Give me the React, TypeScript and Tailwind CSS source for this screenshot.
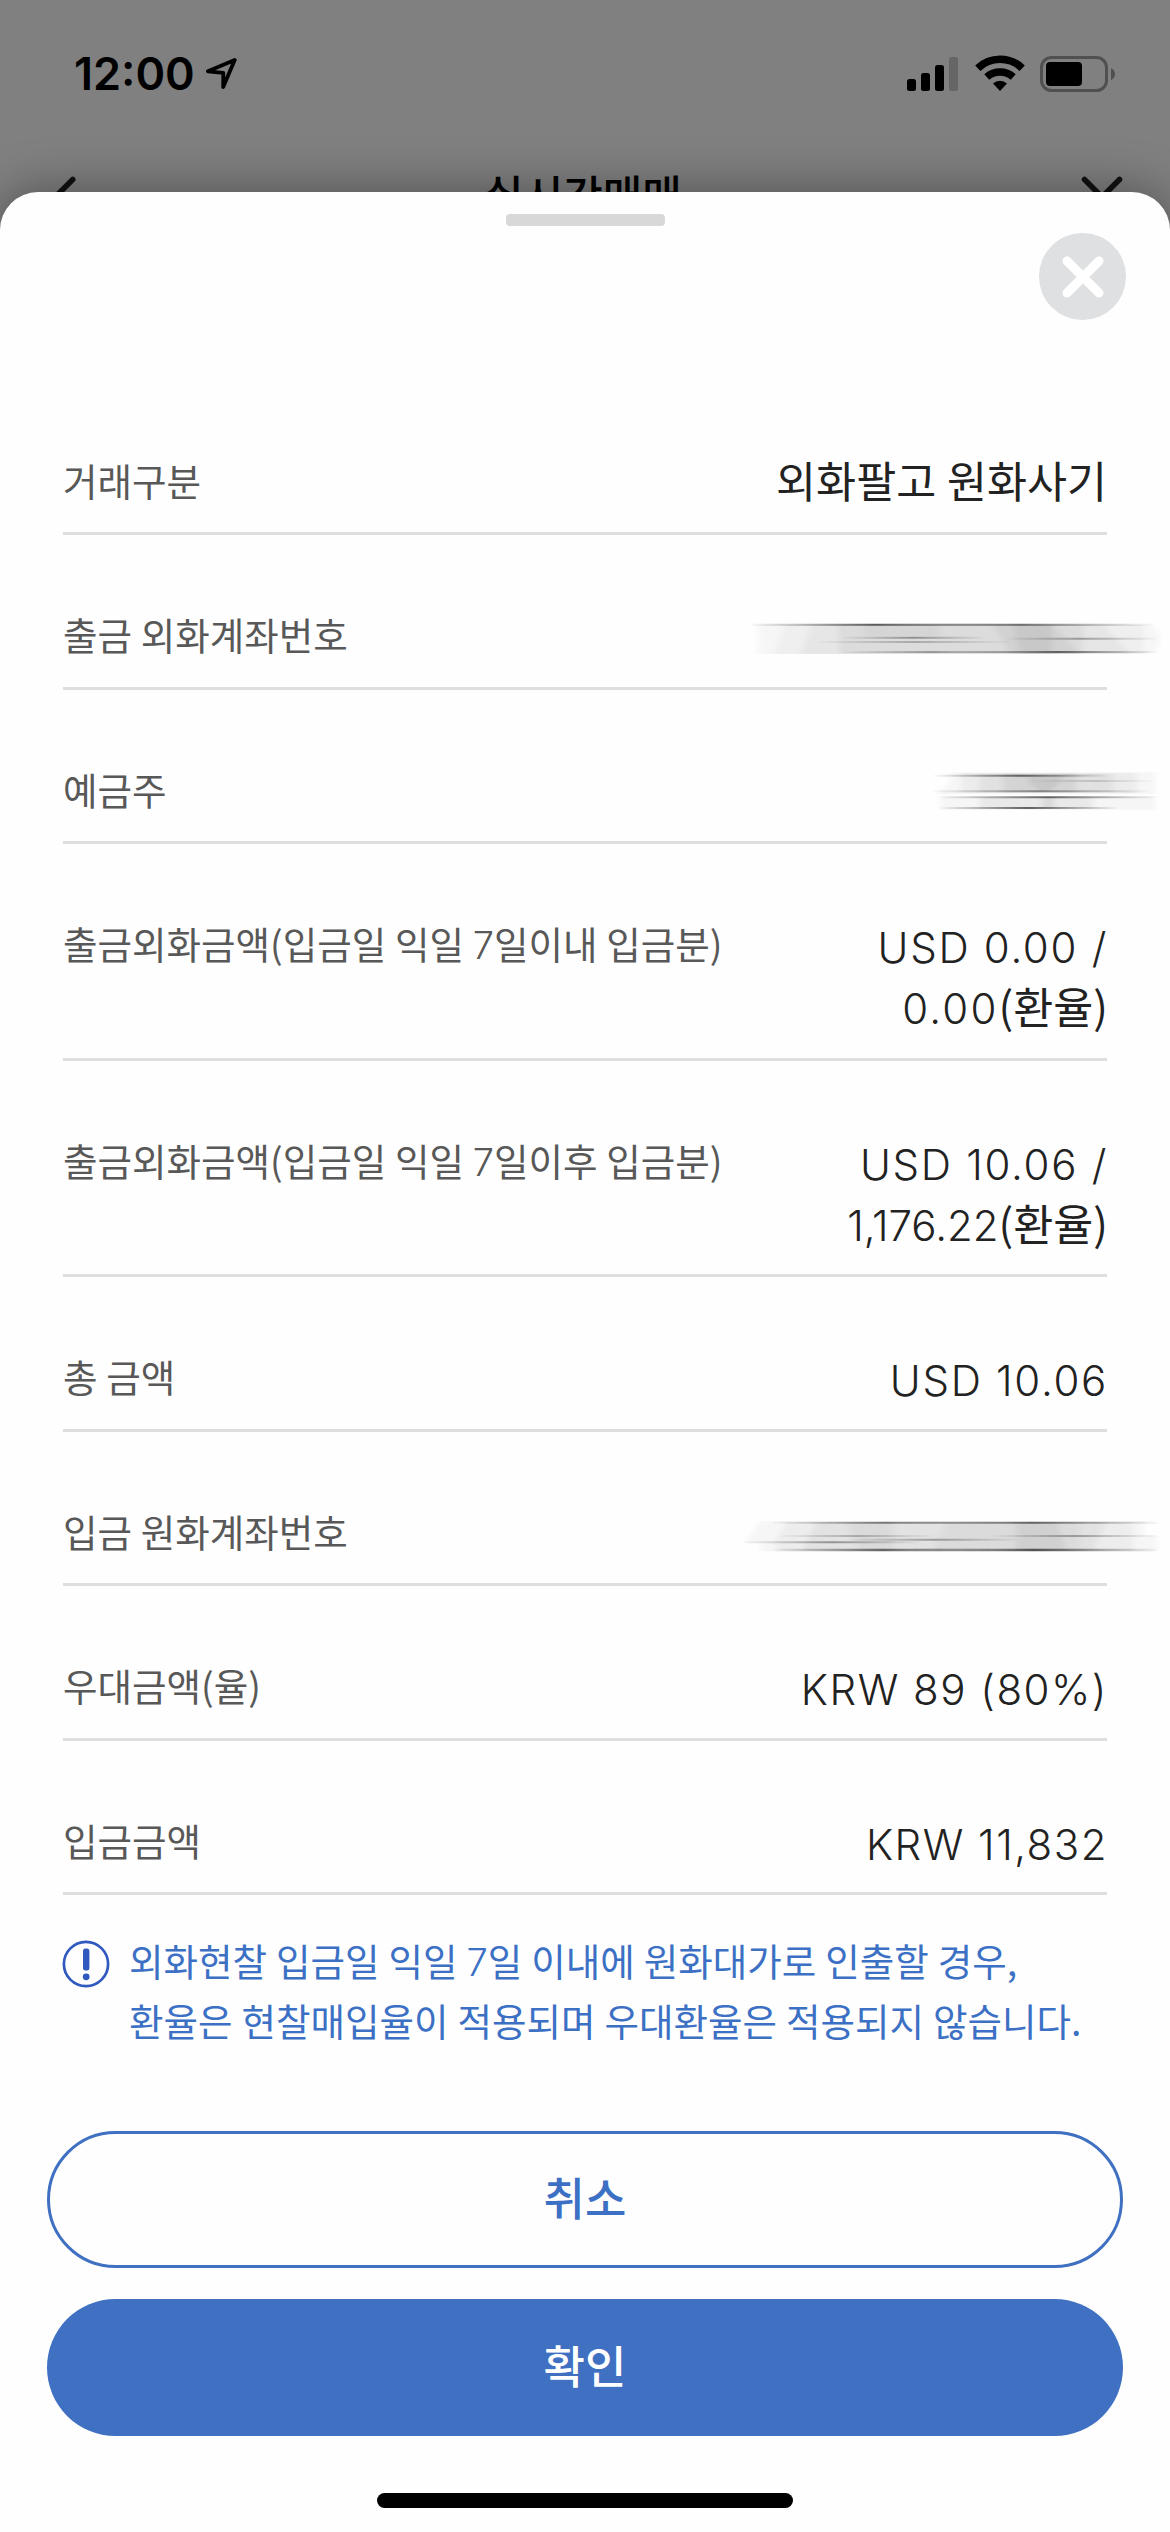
import { X, ChevronLeft } from "lucide-react";
import type { ReactNode } from "react";

type Band = { d: string; fill: string };
type Streak = { x1: number; x2: number; y: number; w: number; opacity: number };

function Smudge({
    id,
    viewBox,
    className,
    bands,
    streaks,
}: {
    id: string;
    viewBox: string;
    className: string;
    bands: Band[];
    streaks: Streak[];
}) {
    return (
        <svg viewBox={viewBox} className={className} aria-hidden="true">
            <defs>
                <filter id={`${id}-soft`} x="-5%" y="-5%" width="110%" height="110%">
                    <feGaussianBlur stdDeviation="9 1.2" />
                </filter>
                <filter id={`${id}-line`} x="-5%" y="-60%" width="110%" height="220%">
                    <feGaussianBlur stdDeviation="4 1.3" />
                </filter>
                <linearGradient id={`${id}-ink`}>
                    <stop offset="0" stopColor="#333" stopOpacity="0.05" />
                    <stop offset="0.5" stopColor="#333" stopOpacity="1" />
                    <stop offset="1" stopColor="#333" stopOpacity="0.05" />
                </linearGradient>
            </defs>
            <g filter={`url(#${id}-soft)`}>
                {bands.map((band, i) => (
                    <path key={i} d={band.d} fill={band.fill} />
                ))}
            </g>
            {streaks.map((s, i) => (
                <rect
                    key={i}
                    x={s.x1}
                    y={s.y - s.w / 2}
                    width={s.x2 - s.x1}
                    height={s.w}
                    rx={s.w / 2}
                    fill={`url(#${id}-ink)`}
                    filter={`url(#${id}-line)`}
                    opacity={s.opacity}
                />
            ))}
        </svg>
    );
}

function ForeignAccountSmudge() {
    return (
        <Smudge
            id="foreign"
            viewBox="150 600 1240 120"
            className="mt-[16px] -mr-[56px] h-[40px] w-[413px] shrink-0"
            bands={[
                { d: "M176 618H1340Q1378 624 1378 660T1336 704H176Z", fill: "#f6f6f6" },
                { d: "M254 618H1330V704H222Z", fill: "#efefef" },
                { d: "M336 618H1212L1290 704H300Z", fill: "#e6e6e6" },
                { d: "M412 618H1150V704H420Z", fill: "#dcdcdc" },
                { d: "M492 618H720V650H492Z", fill: "#d5d5d5" },
                { d: "M880 618H1060L1140 704H930Z", fill: "#d2d2d2" },
                { d: "M940 618H1056V704H960Z", fill: "#c8c8c8" },
            ]}
            streaks={[
                { x1: 155, x2: 900, y: 617, w: 6, opacity: 0.8 },
                { x1: 560, x2: 1360, y: 617, w: 6, opacity: 0.7 },
                { x1: 430, x2: 850, y: 656, w: 6, opacity: 0.45 },
                { x1: 355, x2: 930, y: 669, w: 5, opacity: 0.4 },
                { x1: 920, x2: 1370, y: 659, w: 6, opacity: 0.4 },
                { x1: 430, x2: 960, y: 699, w: 6, opacity: 0.4 },
                { x1: 780, x2: 1370, y: 699, w: 6, opacity: 0.7 },
            ]}
        />
    );
}

function HolderSmudge() {
    return (
        <Smudge
            id="holder"
            viewBox="700 1045 690 135"
            className="mt-[10px] -mr-[56px] h-[45px] w-[230px] shrink-0"
            bands={[
                { d: "M760 1058H1366V1124H710Q745 1108 760 1058Z", fill: "#f6f6f6" },
                { d: "M722 1130H1366V1170H722Z", fill: "#f6f6f6" },
                { d: "M786 1060H1310V1120H786Z", fill: "#ececec" },
                { d: "M840 1134H1180V1166H840Z", fill: "#e9e9e9" },
                { d: "M840 1062H1240V1118H840Z", fill: "#e1e1e1" },
                { d: "M910 1062H1130V1118H910Z", fill: "#d4d4d4" },
                { d: "M980 1066H1090Q1070 1112 1035 1116Q990 1108 980 1066Z", fill: "#c8c8c8" },
                { d: "M1028 1134H1062V1166H1028Z", fill: "#d8d8d8" },
            ]}
            streaks={[
                { x1: 705, x2: 1220, y: 1068, w: 6, opacity: 0.7 },
                { x1: 1000, x2: 1360, y: 1084, w: 5, opacity: 0.25 },
                { x1: 700, x2: 1340, y: 1115, w: 6, opacity: 0.5 },
                { x1: 725, x2: 1365, y: 1133, w: 6, opacity: 0.75 },
                { x1: 725, x2: 1250, y: 1165, w: 6, opacity: 0.75 },
            ]}
        />
    );
}

function WonAccountSmudge() {
    return (
        <Smudge
            id="won"
            viewBox="130 105 1260 125"
            className="mt-[15px] -mr-[56px] h-[41.7px] w-[420px] shrink-0"
            bands={[
                { d: "M180 124H1334V166H1370V214H184V190H136Z", fill: "#f6f6f6" },
                { d: "M262 126H1300V212H240L224 190Z", fill: "#ededed" },
                { d: "M350 126H1220L1180 212H310Z", fill: "#e2e2e2" },
                { d: "M440 126H580V212H480Z", fill: "#dadada" },
                { d: "M740 126H1140V212H700Z", fill: "#dbdbdb" },
                { d: "M950 126H1070L1100 212H950Z", fill: "#d0d0d0" },
            ]}
            streaks={[
                { x1: 220, x2: 900, y: 128, w: 6, opacity: 0.6 },
                { x1: 620, x2: 1375, y: 128, w: 6, opacity: 0.7 },
                { x1: 240, x2: 700, y: 168, w: 6, opacity: 0.3 },
                { x1: 135, x2: 660, y: 187, w: 6, opacity: 0.45 },
                { x1: 440, x2: 960, y: 179, w: 6, opacity: 0.4 },
                { x1: 880, x2: 1370, y: 168, w: 6, opacity: 0.4 },
                { x1: 220, x2: 880, y: 210, w: 7, opacity: 0.7 },
                { x1: 640, x2: 1370, y: 210, w: 7, opacity: 0.8 },
            ]}
        />
    );
}

function Amount({
    children,
    className = "tracking-[1.7px]",
}: {
    children: ReactNode;
    className?: string;
}) {
    return (
        <span
            className={`-mr-[1px] block font-['Inter'] text-[42px] leading-[61px] font-light first:mt-[5px] ${className}`}
        >
            {children}
        </span>
    );
}

function RateUnit() {
    return (
        <span className="font-['Noto_Sans_CJK_KR',sans-serif] text-[43.5px] leading-none font-normal tracking-normal">
            (환율)
        </span>
    );
}

function Seven() {
    return <span className="font-['Inter'] text-[38px] leading-none font-light">7</span>;
}

const rows: { id: string; label: ReactNode; value: ReactNode; tall?: boolean }[] = [
    {
        id: "type",
        label: "거래구분",
        value: <span className="text-[43.5px] [word-spacing:1px]">외화팔고 원화사기</span>,
    },
    { id: "from", label: "출금 외화계좌번호", value: <ForeignAccountSmudge /> },
    { id: "holder", label: "예금주", value: <HolderSmudge /> },
    {
        id: "within",
        label: (
            <>
                출금외화금액(입금일 익일 <Seven />
                일이내 입금분)
            </>
        ),
        tall: true,
        value: (
            <>
                <Amount>USD 0.00 /</Amount>
                <Amount className="tracking-[2.2px]">
                    0.00
                    <RateUnit />
                </Amount>
            </>
        ),
    },
    {
        id: "after",
        label: (
            <>
                출금외화금액(입금일 익일 <Seven />
                일이후 입금분)
            </>
        ),
        tall: true,
        value: (
            <>
                <Amount>USD 10.06 /</Amount>
                <Amount className="tracking-normal">
                    1,176.22
                    <RateUnit />
                </Amount>
            </>
        ),
    },
    { id: "total", label: "총 금액", value: <Amount>USD 10.06</Amount> },
    { id: "to", label: "입금 원화계좌번호", value: <WonAccountSmudge /> },
    {
        id: "discount",
        label: "우대금액(율)",
        value: <Amount className="tracking-[1.5px]">KRW 89 (80%)</Amount>,
    },
    {
        id: "deposit",
        label: "입금금액",
        value: <Amount className="tracking-[1.5px]">KRW 11,832</Amount>,
    },
];

function StatusBar() {
    return (
        <div className="flex h-[150px] items-start justify-between pt-[47px] pr-[54px] pl-[74px]">
            <div className="flex items-start">
                <span className="font-['Inter'] text-[45px] leading-[54px] font-semibold text-black">
                    12:00
                </span>
                <svg viewBox="0 0 34 38" className="mt-[9px] ml-[8px] h-[38px] w-[34px]">
                    <path
                        d="M31.7 4L4.9 15.3L20.3 16.8L20.2 31Z"
                        fill="none"
                        stroke="black"
                        strokeWidth="3.8"
                        strokeLinejoin="round"
                    />
                </svg>
            </div>
            <div className="flex items-start pt-[8px]">
                <svg viewBox="0 0 51 38" className="h-[38px] w-[51px]">
                    <rect x="0" y="24" width="9" height="12" rx="2.5" />
                    <rect x="14" y="18" width="9" height="18" rx="2.5" />
                    <rect x="28" y="10" width="9" height="26" rx="2.5" />
                    <rect x="42" y="2" width="9" height="34" rx="2.5" fill="#666" />
                </svg>
                <svg viewBox="0 0 50 38" className="ml-[17px] h-[38px] w-[50px]">
                    <g fill="none" stroke="black" strokeWidth="7.6">
                        <path d="M2.8 13.2A32 32 0 0 1 47.2 13.2" />
                        <path d="M11.8 22A20 20 0 0 1 38.2 22" />
                    </g>
                    <path d="M25 36L18 28.6A10 10 0 0 1 32 28.6Z" />
                </svg>
                <svg viewBox="0 0 76 38" className="ml-[15px] h-[38px] w-[76px]">
                    <rect x="1.5" y="2.5" width="65" height="33" rx="10" fill="none" stroke="#505050" strokeWidth="3" />
                    <rect x="6" y="7" width="36" height="24" rx="4" />
                    <path d="M71 13Q75 15 75 19T71 25Z" fill="#505050" />
                </svg>
            </div>
        </div>
    );
}

export default function App() {
    return (
        <div className="flex h-[2532px] w-[1170px] flex-col overflow-hidden bg-[#808080] font-['Noto_Sans_CJK_KR',sans-serif]">
            <StatusBar />
            {/* page header, mostly hidden behind the sheet */}
            <div className="-mb-[46px] flex h-[88px] shrink-0 items-start justify-between pt-[12px] pr-[33px] pl-[29px]">
                <ChevronLeft className="size-[70px] text-[#111]" strokeWidth={1.9} />
                <span className="text-[43px] leading-[62px] font-medium text-black">실시간매매</span>
                <X className="size-[70px] text-[#111]" strokeWidth={1.9} />
            </div>

            <div className="relative flex flex-1 flex-col rounded-t-[38px] bg-[#fefefe] shadow-[0_0_50px_rgba(0,0,0,0.4)]">
                <div className="mx-auto mt-[22px] h-[12px] w-[159px] rounded-[4px] bg-[#d8d8d8]" />
                <button className="mt-[7px] mr-[44px] flex size-[87px] items-center justify-center self-end rounded-full bg-[#dfe0e2]">
                    <svg viewBox="0 0 42 42" className="size-[42px]">
                        <path d="M5 5L37 37M37 5L5 37" stroke="white" strokeWidth="9" strokeLinecap="round" />
                    </svg>
                </button>

                <div className="mt-[60.5px] px-[63px]">
                    {rows.map((row) => (
                        <div
                            key={row.id}
                            className={`flex items-start justify-between border-b-[3px] border-[#dedede] pt-[68px] leading-[62px] ${
                                row.tall ? "h-[216.7px]" : "h-[154.5px]"
                            }`}
                        >
                            <span className="text-[37.5px] whitespace-nowrap text-[#585858] [word-spacing:0.4px]">
                                {row.label}
                            </span>
                            <div className="flex shrink-0 flex-col items-end text-right whitespace-nowrap text-[#222]">
                                {row.value}
                            </div>
                        </div>
                    ))}
                </div>

                <div className="mt-[38px] flex items-start pl-[62px] text-[#3c70c4]">
                    <svg viewBox="0 0 48 48" className="mt-[7px] size-[48px]">
                        <circle cx="24" cy="24" r="22.1" fill="none" stroke="#3059c0" strokeWidth="2.7" />
                        <rect x="21" y="8.5" width="6.4" height="22" rx="2.5" fill="#3059c0" />
                        <circle cx="24.2" cy="36.8" r="3.4" fill="#3059c0" />
                    </svg>
                    <p className="-mt-[3px] ml-[19px] text-[37.5px] leading-[59.3px] whitespace-nowrap [word-spacing:0.6px]">
                        외화현찰 입금일 익일 <Seven />일 이내에 원화대가로 인출할 경우,
                        <br />
                        환율은 현찰매입율이 적용되며 우대환율은 적용되지 않습니다.
                    </p>
                </div>

                <div className="mt-auto flex flex-col items-center px-[47px] pb-[24px]">
                    <button className="h-[137px] w-full rounded-full border-[3px] border-[#3f70c2] pb-[6px] text-[45px] font-medium text-[#3c70c4]">
                        취소
                    </button>
                    <button className="mt-[31px] h-[137px] w-full rounded-full bg-[#3f70c2] pb-[6px] text-[45px] font-medium text-white">
                        확인
                    </button>
                    <div className="mt-[57px] h-[15px] w-[416px] rounded-full bg-black" />
                </div>
            </div>
        </div>
    );
}
